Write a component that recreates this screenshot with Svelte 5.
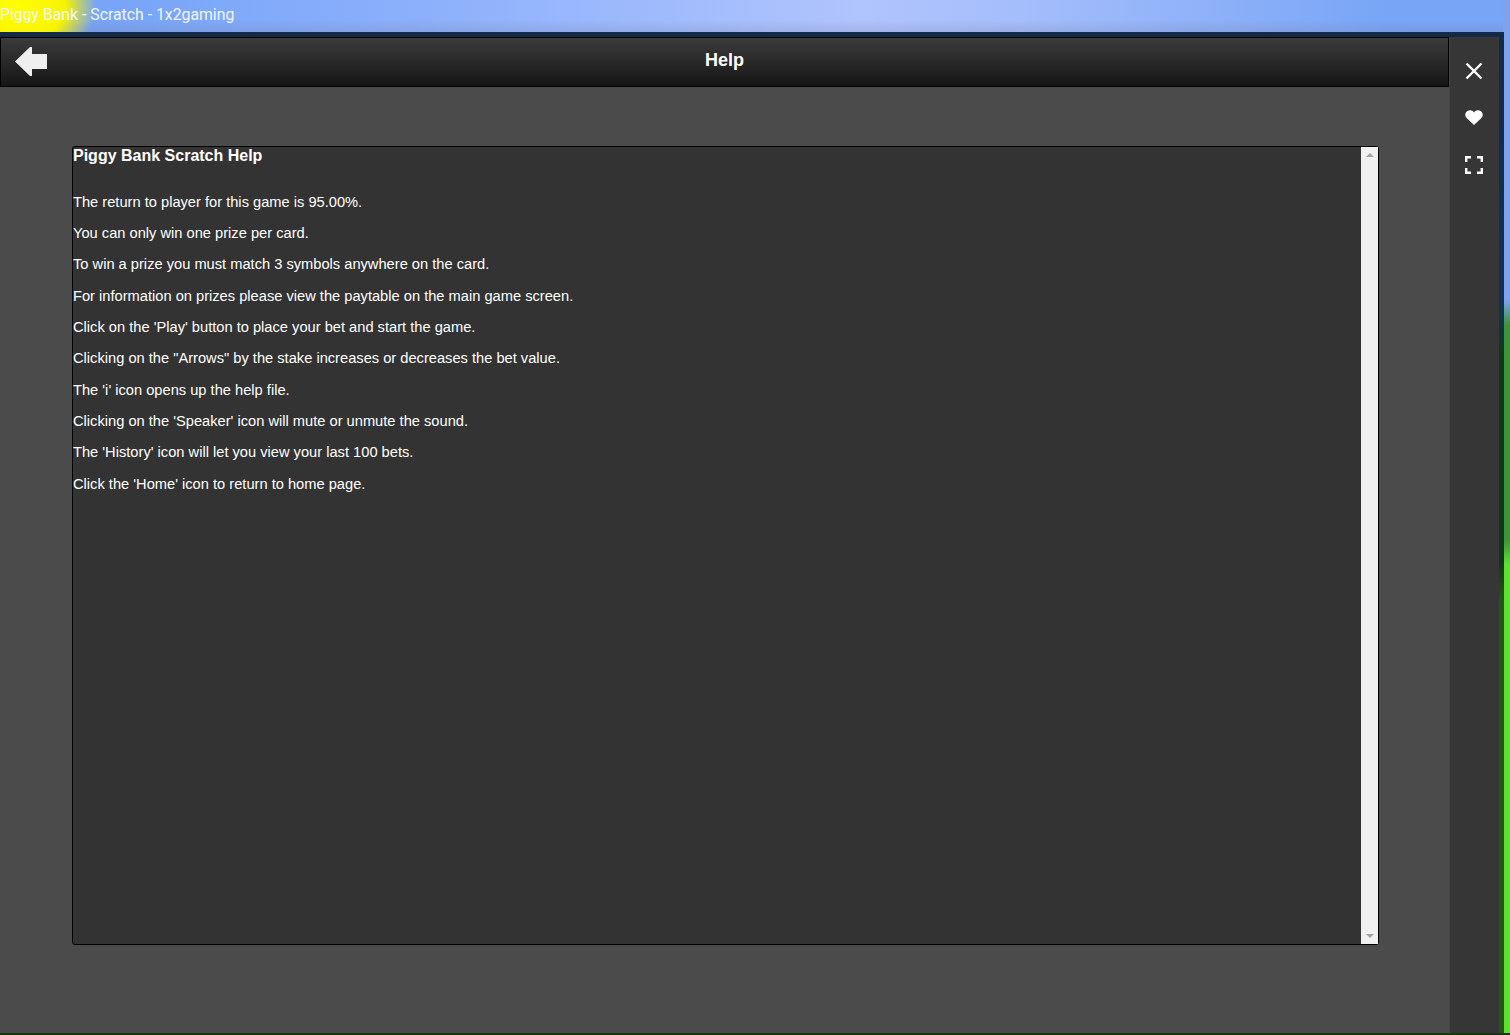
<script>
	const lines = [
		'The return to player for this game is 95.00%.',
		'You can only win one prize per card.',
		'To win a prize you must match 3 symbols anywhere on the card.',
		'For information on prizes please view the paytable on the main game screen.',
		"Click on the 'Play' button to place your bet and start the game.",
		'Clicking on the "Arrows" by the stake increases or decreases the bet value.',
		"The 'i' icon opens up the help file.",
		"Clicking on the 'Speaker' icon will mute or unmute the sound.",
		"The 'History' icon will let you view your last 100 bets.",
		"Click the 'Home' icon to return to home page."
	];
</script>

<div class="page">
	<div class="titlebar">Piggy Bank - Scratch - 1x2gaming</div>
	<div class="window">
		<div class="main">
			<header class="header">
				<button class="back" aria-label="Back">
					<svg width="32" height="29" viewBox="0 0 32 29"><path d="M0 14.5 L15 0 H17 V7 H32 V22 H17 V29 H15 Z" fill="#efefef" /></svg>
				</button>
				<h1>Help</h1>
			</header>
			<div class="content">
				<div class="helpbox">
					<div class="text">
						<h2>Piggy Bank Scratch Help</h2>
						{#each lines as line}
							<p>{line}</p>
						{/each}
					</div>
					<div class="scrollbar">
						<span class="arrow up"></span>
						<span class="arrow down"></span>
					</div>
				</div>
			</div>
		</div>
		<aside class="side">
			<button aria-label="Close">
				<svg width="18" height="18" viewBox="0 0 18 18"><path d="M1.5 1.5 L16.5 16.5 M16.5 1.5 L1.5 16.5" stroke="#fff" stroke-width="2.4" fill="none" /></svg>
			</button>
			<button aria-label="Favourite">
				<svg width="18" height="15" viewBox="0 0 18 16" preserveAspectRatio="none"><path d="M9 16 L1.6 8.6 C-0.6 6.2 0 2.6 2.4 1 C4.8 -0.5 7.6 0.2 9 2.6 C10.4 0.2 13.2 -0.5 15.6 1 C18 2.6 18.6 6.2 16.4 8.6 Z" fill="#fff" /></svg>
			</button>
			<button aria-label="Fullscreen">
				<svg width="18" height="18" viewBox="0 0 18 18"><path d="M1.2 6 V1.2 H6 M12 1.2 H16.8 V6 M16.8 12 V16.8 H12 M6 16.8 H1.2 V12" stroke="#fff" stroke-width="2.4" fill="none" /></svg>
			</button>
		</aside>
	</div>
</div>

<style>
	:global(body) {
		margin: 0;
		background: #000;
	}

	/* the game backdrop shows round the window: sky, yellow blob, grass at the right edge */
	.page {
		width: 1510px;
		height: 1035px;
		overflow: hidden;
		display: flex;
		flex-direction: column;
		background:
			linear-gradient(#17350f, #17350f) 0 100% / 100% 2px no-repeat,
			linear-gradient(180deg, #7ea2ee 0, #7ea2ee 300px, #41923c 325px, #41923c 540px, #5fe02e 565px, #5fe02e 100%) 100% 0 / 7px 100% no-repeat,
			radial-gradient(ellipse 78px 60px at 18px 6px, #ffff00 0%, #f8f400 60%, rgba(240, 240, 20, 0) 100%),
			linear-gradient(180deg, rgba(120, 120, 160, 0) 20px, rgba(120, 120, 160, 0.22) 32px),
			linear-gradient(90deg, #76a3f8 0%, #78a5f8 8%, #8cb0fb 28%, #b0c4fd 57%, #a4bdfb 68%, #78a5f6 92%, #78a5f5 100%);
	}

	.titlebar {
		height: 32px;
		flex: none;
		font: 15.8px/29px Roboto, sans-serif;
		color: #f2f5ff;
	}

	.window {
		flex: none;
		box-sizing: border-box;
		width: 1504px;
		height: 1001px;
		padding: 5px 5px 0 0;
		display: flex;
		background: linear-gradient(180deg, #12294a 0, #10305c 270px, #0d3a14 325px, #0d3a14 530px, #1f5a10 570px, #1f5a10 100%);
	}

	.main {
		width: 1450px;
		flex: none;
		box-sizing: border-box;
		display: flex;
		flex-direction: column;
		background: #4b4b4b;
		border-right: 1px solid #444;
	}

	.header {
		height: 50px;
		flex: none;
		box-sizing: border-box;
		border: 1px solid #000;
		padding-bottom: 4px;
		background: linear-gradient(180deg, #3b3b3b 0%, #161616 100%);
		position: relative;
		display: flex;
		align-items: center;
		justify-content: center;
	}

	.header h1 {
		margin: 0;
		font: bold 18px "Liberation Sans", Arial, sans-serif;
		color: #fff;
	}

	button {
		background: none;
		border: 0;
		padding: 0;
		display: flex;
		align-items: center;
		justify-content: center;
	}

	.back {
		position: absolute;
		left: 14px;
		top: 9px;
	}

	.content {
		flex: 1;
		padding: 59px 70px 88px 72px;
		min-height: 0;
	}

	.helpbox {
		height: 100%;
		box-sizing: border-box;
		border: 1px solid #000;
		border-radius: 3px;
		background: #333;
		display: flex;
	}

	.text {
		flex: 1;
		font: 11pt/17px "Liberation Sans", Arial, sans-serif;
		color: #fff;
	}

	h2 {
		margin: 0;
		font: bold 16px/18px "Liberation Sans", Arial, sans-serif;
	}

	p {
		margin: 0 0 14.35px;
	}

	h2 + p {
		margin-top: 28.7px;
	}

	.scrollbar {
		width: 17px;
		flex: none;
		background: #f1f1f1;
		display: flex;
		flex-direction: column;
		justify-content: space-between;
		align-items: center;
		padding: 6px 0;
	}

	.arrow {
		width: 0;
		height: 0;
		border-left: 4px solid transparent;
		border-right: 4px solid transparent;
	}

	.up {
		border-bottom: 4px solid #a3a3a3;
	}

	.down {
		border-top: 4px solid #a3a3a3;
	}

	.side {
		flex: 1;
		display: flex;
		flex-direction: column;
		background: #363636;
		padding: 10px 1px 0 0;
	}

	.side button {
		height: 47px;
	}
</style>
